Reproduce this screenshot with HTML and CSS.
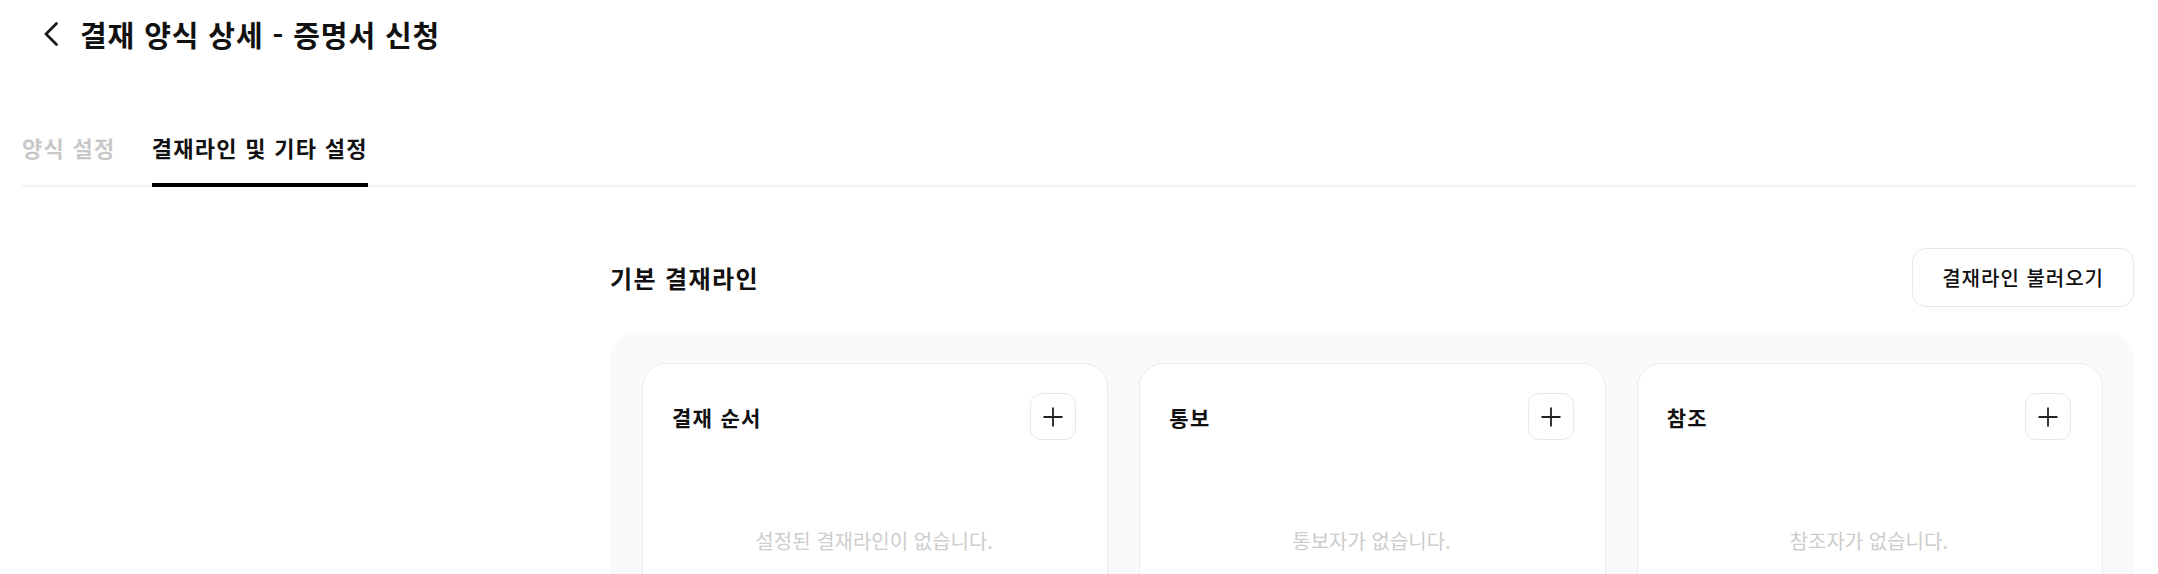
FILE: index.html
```html
<!DOCTYPE html>
<html lang="ko">
<head>
<meta charset="utf-8">
<title>결재 양식 상세 - 증명서 신청</title>
<link rel="stylesheet" href="styles.css">
</head>
<body>
<div class="page">
  <header class="header">
    <button class="back" type="button" aria-label="뒤로">
      <svg width="16" height="24" viewBox="0 0 16 24"><polyline points="13.5,1.5 3,12 13.5,22.5" fill="none" stroke="#1a1a1a" stroke-width="2.8" stroke-linecap="round" stroke-linejoin="round"/></svg>
    </button>
    <h1 class="title">결재 양식 상세 - 증명서 신청</h1>
  </header>
  <nav class="tabs">
    <span class="tab">양식 설정</span>
    <span class="tab active">결재라인 및 기타 설정</span>
  </nav>
  <main class="main">
    <div class="section-head">
      <h2 class="section-title">기본 결재라인</h2>
      <button class="load-btn" type="button">결재라인 불러오기</button>
    </div>
    <div class="panel">
      <div class="card">
        <div class="card-head">
          <h3 class="card-title">결재 순서</h3>
          <button class="add-btn" type="button" aria-label="추가"><svg width="22" height="22" viewBox="0 0 22 22"><path d="M11 1.5V20.5M1.5 11H20.5" stroke="#222" stroke-width="1.8" fill="none"/></svg></button>
        </div>
        <p class="empty">설정된 결재라인이 없습니다.</p>
      </div>
      <div class="card">
        <div class="card-head">
          <h3 class="card-title">통보</h3>
          <button class="add-btn" type="button" aria-label="추가"><svg width="22" height="22" viewBox="0 0 22 22"><path d="M11 1.5V20.5M1.5 11H20.5" stroke="#222" stroke-width="1.8" fill="none"/></svg></button>
        </div>
        <p class="empty">통보자가 없습니다.</p>
      </div>
      <div class="card">
        <div class="card-head">
          <h3 class="card-title">참조</h3>
          <button class="add-btn" type="button" aria-label="추가"><svg width="22" height="22" viewBox="0 0 22 22"><path d="M11 1.5V20.5M1.5 11H20.5" stroke="#222" stroke-width="1.8" fill="none"/></svg></button>
        </div>
        <p class="empty">참조자가 없습니다.</p>
      </div>
    </div>
  </main>
</div>
</body>
</html>
```
FILE: styles.css
```css
* { box-sizing: border-box; }
html, body { margin: 0; padding: 0; background: #fff; }
body {
  font-family: "Noto Sans CJK KR", "Noto Sans", sans-serif;
  color: #111;
}
.page { padding: 0 22px; }
.header {
  height: 68px;
  display: flex;
  align-items: center;
  padding-left: 21px;
  gap: 21px;
}
.back {
  border: 0;
  background: none;
  padding: 0;
  width: 16px;
  height: 24px;
  display: flex;
  cursor: pointer;
}
.title {
  margin: 0;
  font-size: 29px;
  font-weight: 700;
  line-height: 40px;
  letter-spacing: 0.9px;
}
.tabs {
  height: 119px;
  display: flex;
  align-items: flex-end;
  gap: 36px;
  box-shadow: inset 0 -2px 0 #f3f3f3;
}
.tab {
  font-size: 22px;
  font-weight: 700;
  line-height: 30px;
  letter-spacing: 1.3px;
  color: #c8c8c8;
  padding-bottom: 21px;
  border-bottom: 4px solid transparent;
}
.tab.active {
  color: #111;
  border-bottom-color: #000;
}
.main {
  margin: 61px 2px 0 588px;
}
.section-head {
  display: flex;
  justify-content: space-between;
  align-items: center;
}
.section-title {
  margin: 0;
  font-size: 24px;
  font-weight: 700;
  line-height: 30px;
  letter-spacing: 1.4px;
}
.load-btn {
  height: 59px;
  padding: 0 29px;
  border: 1.5px solid #e8e8e8;
  border-radius: 14px;
  background: #fff;
  font-family: inherit;
  font-size: 20px;
  font-weight: 500;
  letter-spacing: 1px;
  color: #111;
}
.panel {
  margin-top: 25px;
  background: #fafafa;
  border-radius: 26px;
  padding: 31px 31px 0 32px;
  display: grid;
  grid-template-columns: repeat(3, 1fr);
  gap: 31px;
}
.card {
  background: #fff;
  border: 1px solid #ebebeb;
  border-radius: 24px;
  padding: 29px 31px 0 29px;
  height: 260px;
}
.card-head {
  display: flex;
  justify-content: space-between;
  align-items: center;
}
.card-title {
  margin: 0;
  font-size: 21px;
  font-weight: 700;
  line-height: 30px;
  letter-spacing: 1.3px;
}
.add-btn {
  width: 46px;
  height: 47px;
  border: 1.5px solid #e8e8e8;
  border-radius: 11px;
  background: #fff;
  display: flex;
  align-items: center;
  justify-content: center;
  padding: 0;
}
.empty {
  margin: 86px 0 0;
  text-align: center;
  font-size: 20px;
  line-height: 30px;
  color: #cdcdcd;
}
```
